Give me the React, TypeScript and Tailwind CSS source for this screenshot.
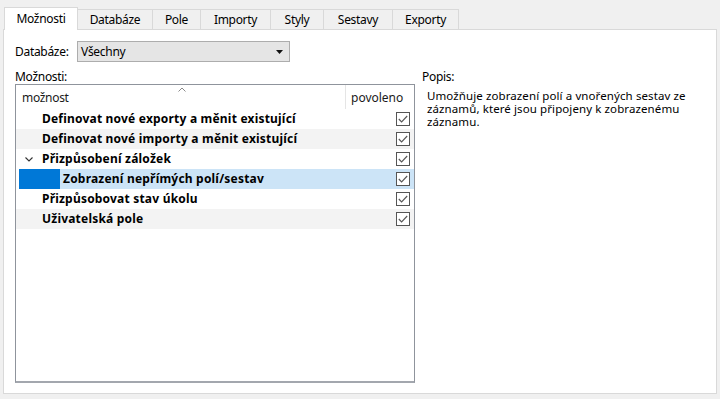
import * as React from 'react';

const TABS = [
  { label: 'Možnosti', w: 'w-[74px]', active: true },
  { label: 'Databáze', w: 'w-[76px]' },
  { label: 'Pole', w: 'w-[49px]' },
  { label: 'Importy', w: 'w-[71px]' },
  { label: 'Styly', w: 'w-[54px]' },
  { label: 'Sestavy', w: 'w-[70px]' },
  { label: 'Exporty', w: 'w-[67px]' },
];

const ROWS = [
  { text: 'Definovat nové exporty a měnit existující' },
  { text: 'Definovat nové importy a měnit existující' },
  { text: 'Přizpůsobení záložek', expander: true },
  { text: 'Zobrazení nepřímých polí/sestav', selected: true },
  { text: 'Přizpůsobovat stav úkolu' },
  { text: 'Uživatelská pole' },
];

function CheckBox() {
  return (
    <svg width="14" height="14" viewBox="0 0 14 14" className="shrink-0 -mt-[1px]">
      <rect x="0.5" y="0.5" width="13" height="13" fill="#fff" stroke="#555" />
      <path d="M2.8 7 L5.6 9.9 L11.2 4" fill="none" stroke="#555" strokeWidth="1.1" />
    </svg>
  );
}

export default function App() {
  return (
    <div className="w-[720px] h-[399px] bg-[#f0f0f0] pt-[7px] px-[3px] font-['Noto_Sans',sans-serif] text-[12px] tracking-[-0.3px] text-black overflow-hidden">
      {/* Tabs */}
      <div className="flex items-end h-[22px] pl-[1px]">
        {TABS.map((t, i) =>
          t.active ? (
            <div
              key={t.label}
              className={`${t.w} h-[23px] -mb-px relative z-10 bg-white border border-b-0 border-[#d9d9d9] flex items-center justify-center`}
            >
              {t.label}
            </div>
          ) : (
            <div
              key={t.label}
              className={`${t.w} h-[20px] ${i > 0 ? '-ml-px' : ''} bg-[#f0f0f0] border border-b-0 border-[#d9d9d9] flex items-center justify-center pt-[1px]`}
            >
              {t.label}
            </div>
          )
        )}
      </div>

      {/* Panel */}
      <div className="h-[365px] bg-white border border-[#d9d9d9] pt-[11px] pl-[11px]">
        <div className="flex items-center h-[21px]">
          <span className="w-[62px] leading-[14px]">Databáze:</span>
          <div className="w-[213px] h-[21px] bg-[#e5e5e5] border border-[#adadad] flex items-center justify-between pl-[3px] pr-[6px]">
            <span>Všechny</span>
            <svg width="7" height="4" viewBox="0 0 7 4">
              <path d="M0 0 H7 L3.5 4 Z" fill="#111" />
            </svg>
          </div>
        </div>

        <div className="flex mt-[8px]">
          {/* Options list */}
          <div className="w-[400px]">
            <div className="h-[14px] leading-[14px]">Možnosti:</div>
            <div className="h-[299px] border border-[#8f949c] border-b-2 border-b-[#a3a7ae] bg-white relative">
              <svg width="8" height="5" viewBox="0 0 8 5" className="absolute left-[162px] top-[2px]">
                <path d="M0.5 4.5 L4 1 L7.5 4.5" fill="none" stroke="#8a8a8a" strokeWidth="1" />
              </svg>
              <div className="flex h-[24px] items-center">
                <div className="w-[329px] pl-[6px] text-[#1a1a1a] pt-[2px]">možnost</div>
                <div className="w-px h-full bg-[#e5e5e5]" />
                <div className="pl-[5px] text-[#1a1a1a] pt-[2px] tracking-[0px]">povoleno</div>
              </div>
              {ROWS.map((r, i) => {
                const alt = i % 2 === 1 && !r.selected;
                if (r.selected) {
                  return (
                    <div key={r.text} className="flex h-[20px] pl-[3px]">
                      <div className="w-[41px] h-full bg-[#0078d7]" />
                      <div className="flex-1 flex items-center justify-between bg-[#cce4f7] pl-[3px] pr-[4px]">
                        <span className="font-bold whitespace-nowrap tracking-[0.2px]">{r.text}</span>
                        <CheckBox />
                      </div>
                    </div>
                  );
                }
                return (
                  <div
                    key={r.text}
                    className={`flex h-[20px] items-center justify-between pr-[4px] ${alt ? 'bg-[#f3f3f3]' : ''} ${
                      r.expander ? 'pl-[9px]' : 'pl-[26px]'
                    }`}
                  >
                    <div className="flex items-center">
                      {r.expander && (
                        <svg width="8" height="5" viewBox="0 0 8 5" className="mr-[9px]">
                          <path d="M0.5 0.5 L4 4 L7.5 0.5" fill="none" stroke="#333" strokeWidth="1.1" />
                        </svg>
                      )}
                      <span className="font-bold whitespace-nowrap tracking-[0.2px]">{r.text}</span>
                    </div>
                    <CheckBox />
                  </div>
                );
              })}
            </div>
          </div>

          {/* Description */}
          <div className="ml-[7px]">
            <div className="h-[14px] leading-[14px]">Popis:</div>
            <div className="mt-[5px] ml-[5px] text-[11.5px] leading-[13px] tracking-[0.1px] whitespace-nowrap">
              Umožňuje zobrazení polí a vnořených sestav ze
              <br />
              záznamů, které jsou připojeny k zobrazenému
              <br />
              záznamu.
            </div>
          </div>
        </div>
      </div>
    </div>
  );
}
